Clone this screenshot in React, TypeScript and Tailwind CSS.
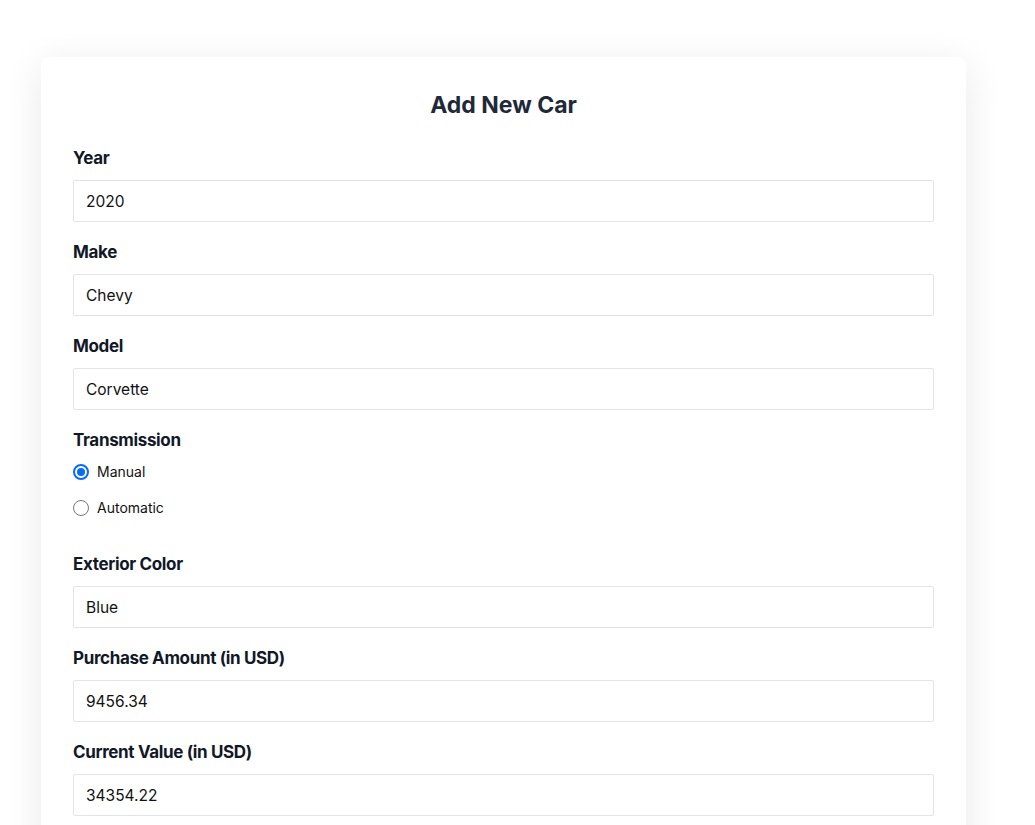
import React from "react";

const Field = ({ label, value }: { label: string; value: string }) => (
  <div className="mb-[18px]">
    <label className="block text-[17px] leading-6 font-bold text-[#111827] mb-[10px] tracking-[-0.35px]">{label}</label>
    <input
      readOnly
      value={value}
      className="block w-full h-[42px] border border-[#e2e4e8] rounded-[2px] px-3 text-[15.5px] text-[#111] bg-white outline-none"
    />
  </div>
);

export default function App() {
  return (
    <div className="min-h-[825px] bg-white pt-[57px] pl-[41px]" style={{ fontFamily: "Inter, 'Noto Sans', sans-serif" }}>
      <div className="w-[925px] bg-white rounded-lg shadow-[0_8px_40px_rgba(0,0,0,0.09)] px-8 pt-8 pb-10">
        <h1 className="text-center text-[23px] leading-8 font-bold text-[#1f2937] mb-[25px]">Add New Car</h1>
        <Field label="Year" value="2020" />
        <Field label="Make" value="Chevy" />
        <Field label="Model" value="Corvette" />
        <div className="mb-[34px]">
          <label className="block text-[17px] leading-6 font-bold text-[#111827] mb-[10px] tracking-[-0.35px]">Transmission</label>
          <div className="flex flex-col gap-4">
            <label className="flex items-center gap-2 text-[14px] leading-5 text-[#111]">
              <span className="w-4 h-4 rounded-full border-2 border-[#0a6cf0] flex items-center justify-center">
                <span className="w-[8px] h-[8px] rounded-full bg-[#0a6cf0]" />
              </span>
              Manual
            </label>
            <label className="flex items-center gap-2 text-[14px] leading-5 text-[#111]">
              <span className="w-4 h-4 rounded-full border border-[#777] bg-white" />
              Automatic
            </label>
          </div>
        </div>
        <Field label="Exterior Color" value="Blue" />
        <Field label="Purchase Amount (in USD)" value="9456.34" />
        <Field label="Current Value (in USD)" value="34354.22" />
      </div>
    </div>
  );
}
